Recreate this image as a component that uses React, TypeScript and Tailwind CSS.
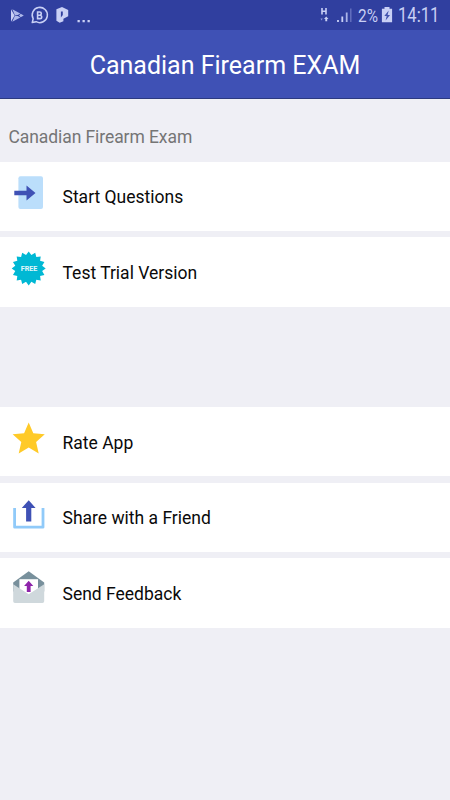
import type { ReactNode } from "react";

const BADGE_POINTS = Array.from({ length: 32 }, (_, i) => {
  const r = i % 2 === 0 ? 17 : 13.7;
  const a = (i * Math.PI) / 16 - Math.PI / 2;
  return `${(20.7 + r * Math.cos(a)).toFixed(2)},${(21.4 + r * Math.sin(a)).toFixed(2)}`;
}).join(" ");

function StartIcon() {
  return (
    <svg className="size-10 shrink-0" viewBox="0 0 40 40">
      <rect x="10.4" y="4.3" width="24.6" height="32.7" rx="2" fill="#bbdefb" />
      <path d="M6.3 18.8h12.2v-5.4l9 7.6-9 7.6v-5.4H6.3z" fill="#3f51b5" />
    </svg>
  );
}

function FreeIcon() {
  return (
    <svg className="size-10 shrink-0" viewBox="0 0 40 40">
      <polygon points={BADGE_POINTS} fill="#00b8d4" />
      <text
        x="21"
        y="23.8"
        textAnchor="middle"
        textLength="16.6"
        className="fill-[#e0f7fa] font-[Roboto,sans-serif] text-[7.2px] font-bold"
      >
        FREE
      </text>
    </svg>
  );
}

function StarIcon() {
  return (
    <svg className="size-10 shrink-0" viewBox="0 0 40 40">
      <path
        d="M20.7 5.4l4.6 10.8 11.5 1-8.7 7.7 2.6 11.5-10-6-10 6 2.6-11.5-8.7-7.7 11.5-1z"
        fill="#ffca28"
      />
    </svg>
  );
}

function ShareIcon() {
  return (
    <svg className="size-10 shrink-0" viewBox="0 0 40 40">
      <path d="M6.6 15v19.2h28.4V15" fill="none" stroke="#90caf9" strokeWidth="2.8" strokeLinejoin="round" />
      <path d="M20.7 7.2l6.9 7.8h-4.3v13.4h-5.2V15h-4.3z" fill="#3f51b5" />
    </svg>
  );
}

function FeedbackIcon() {
  return (
    <svg className="size-10 shrink-0" viewBox="0 0 40 40">
      <path d="M5.2 14.6L20.7 3.2l15.5 11.4v9h-31z" fill="#78909c" />
      <path d="M11.4 11.2h18.6v17H11.4z" fill="#fff" />
      <path d="M5.2 16.3l15.5 10 15.5-10v17a1.8 1.8 0 0 1-1.8 1.8H7a1.8 1.8 0 0 1-1.8-1.8z" fill="#cfd8dc" />
      <path d="M20.7 12.7l4.6 5.4h-2.7v5.9h-3.8v-5.9h-2.7z" fill="#8e24aa" />
    </svg>
  );
}

function Row({ icon, label }: { icon: ReactNode; label: string }) {
  return (
    <button className="flex h-[69.3px] w-full items-start bg-white pt-2.5 pl-2 text-left">
      {icon}
      <span className="ml-[14.5px] pt-[11.8px] text-[17.5px] leading-7 whitespace-nowrap text-[#0a0a0a]">{label}</span>
    </button>
  );
}

function StatusBar() {
  return (
    <div className="flex h-[30px] items-center justify-between bg-[#303f9f] text-[#c9d0f5]">
      <div className="flex h-full items-center">
        {/* notifications */}
        <svg className="h-[30px] w-[100px]" viewBox="0 0 100 30" fill="none">
          <path d="M11 9.3v12.4l3.6-6.2z" fill="#c9d0f5" />
          <path d="M12.3 9.2l8 4.3-2.4 1.5-3 .3zM12.3 21.8l8-4.3-2.4-1.5-3-.3zM20.7 13.8l3.1 1.7-3.1 1.7-1.7-1.7z" fill="#aeb8ea" />
          <path d="M32.2 22.6l1-3.8a7.6 7.6 0 1 1 3 2.9z" stroke="#c9d0f5" strokeWidth="1.5" strokeLinejoin="round" />
          <path d="M37.6 12h2.1a1.5 1.5 0 0 1 0 3.2h-2.1zm0 3.2h2.4a1.7 1.7 0 0 1 0 3.4h-2.4z" stroke="#c9d0f5" strokeWidth="1.6" />
          <path d="M56.4 9.2l5.6-2.2 6.2 2.9v6.4l-4.8 2.4v2.6l-3.7 1.5-3.3-2.1z" fill="#c9d0f5" />
          <path d="M60.9 11.5h1.9v3.6l-1.9 2.4z" fill="#303f9f" />
          <path d="M77.5 20.1h2.3v2.2h-2.3zM82.5 20.1h2.3v2.2h-2.3zM87.5 20.1h2.3v2.2h-2.3z" fill="#c9d0f5" />
        </svg>
      </div>
      <div className="flex h-full items-center">
        {/* data, signal and battery */}
        <svg className="h-[30px] w-[34px]" viewBox="318 0 34 30" fill="none">
          <path d="M322 8v6.6M326 8v6.6M322 11.3h4" stroke="#c9d0f5" strokeWidth="1.6" />
          <path d="M320.5 18.6h2.2l-1.1 2z" fill="#8f9bd8" />
          <path d="M324 19l2.2-2.5 2.3 2.5h-1.3v2.3h-1.9V19z" fill="#c9d0f5" />
          <path d="M338 20v2M342.3 16.5V22" stroke="#c9d0f5" strokeWidth="1.8" />
          <path d="M346.7 12.5V22" stroke="#aab4e8" strokeWidth="1.8" />
          <path d="M350.8 8.5V22" stroke="#6673c0" strokeWidth="1.4" />
        </svg>
        <span className="ml-[6px] w-[22px] origin-left scale-x-[.81] pt-[2px] text-[19px] leading-[30px]">2%</span>
        <svg className="h-[30px] w-[14px]" viewBox="381 0 14 30">
          <path d="M385.5 7h5v1.8h2.6v13.4h-10.2V8.8h2.6z" fill="#c9d0f5" />
          <path d="M389.7 10.5l-4.4 5.6h2.4l-1.1 4.4 4.4-5.6h-2.4z" fill="#4353ae" />
        </svg>
        <span className="ml-1 w-[52px] origin-left scale-x-[.85] pt-[2px] text-[19.5px] leading-[30px]">14:11</span>
      </div>
    </div>
  );
}

export default function App() {
  return (
    <div className="h-[800px] w-[450px] overflow-hidden bg-[#efeff5] font-[Roboto,sans-serif]">
      <StatusBar />
      <header className="flex h-[69px] items-center justify-center border-b border-[#2c3a80] bg-[#3f51b5] pt-1">
        <h1 className="text-[25px] leading-8 whitespace-nowrap text-white">Canadian Firearm EXAM</h1>
      </header>
      <main>
        <h2 className="h-[62.7px] pt-[26px] pl-[8.5px] text-[17.5px] leading-6 tracking-[-0.08px] text-[#757575]">
          Canadian Firearm Exam
        </h2>
        <div className="flex flex-col gap-[6.3px]">
          <Row icon={<StartIcon />} label="Start Questions" />
          <Row icon={<FreeIcon />} label="Test Trial Version" />
        </div>
        <div className="mt-[100.4px] flex flex-col gap-[6.4px]">
          <Row icon={<StarIcon />} label="Rate App" />
          <Row icon={<ShareIcon />} label="Share with a Friend" />
          <Row icon={<FeedbackIcon />} label="Send Feedback" />
        </div>
      </main>
    </div>
  );
}
